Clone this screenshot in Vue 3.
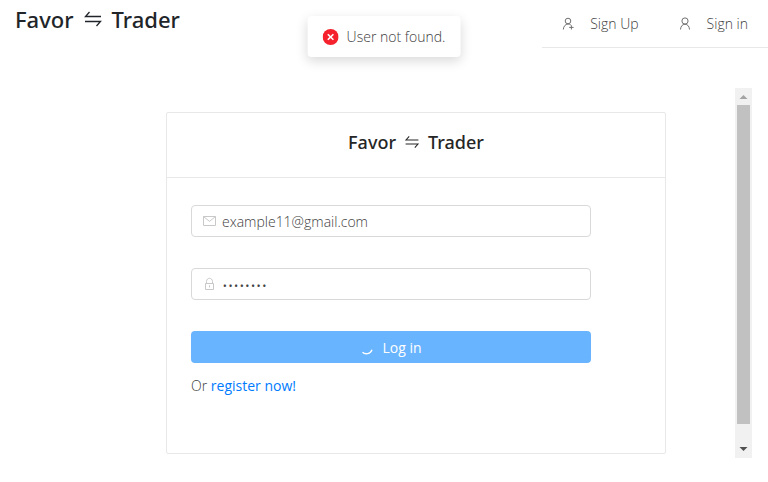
<script setup>
import { ref } from 'vue'

const email = ref('example11@gmail.com')
const password = ref('password')
</script>

<template>
  <div class="page">
    <header class="topbar">
      <h1 class="brand">
        Favor
        <svg class="swap" viewBox="0 0 20 20" aria-hidden="true">
          <path d="M18 7.5H2.5L6.5 3M2 12.5H17.5L13.5 17" />
        </svg>
        Trader
      </h1>
      <nav class="menu">
        <a href="#signup" class="menu-item">
          <svg class="icon" viewBox="0 0 14 14" aria-hidden="true">
            <circle cx="6" cy="4" r="2.8" />
            <path d="M1.3 12.5C1.5 9.4 3.3 7.2 6 7C7.2 7 8.1 7.4 8.8 8M7.2 10.4H11.6M9.4 8.3V12.5" />
          </svg>
          Sign Up
        </a>
        <a href="#signin" class="menu-item">
          <svg class="icon" viewBox="0 0 14 14" aria-hidden="true">
            <circle cx="6" cy="4" r="3.1" />
            <path d="M1.5 12.5C1.7 9.4 3.2 7.4 6 7.2C8.8 7.4 10.3 9.4 10.5 12.5" />
          </svg>
          Sign in
        </a>
      </nav>
    </header>

    <div class="toast" role="alert">
      <svg class="toast-icon" viewBox="0 0 16 16" aria-hidden="true">
        <circle cx="8" cy="8" r="8" />
        <path d="M5.2 5.2L10.8 10.8M10.8 5.2L5.2 10.8" />
      </svg>
      <span>User not found.</span>
    </div>

    <main class="scroller">
      <div class="viewport">
        <section class="card">
          <h2 class="card-title">
            Favor
            <svg class="swap" viewBox="0 0 20 20" aria-hidden="true">
              <path d="M18 7.5H2.5L6.5 3M2 12.5H17.5L13.5 17" />
            </svg>
            Trader
          </h2>
          <form class="form" @submit.prevent>
            <label class="field">
              <svg class="field-icon" viewBox="0 0 14 14" aria-hidden="true">
                <path d="M0.5 2.5H12.5V11.5H0.5ZM0.5 2.5L6.5 7.4L12.5 2.5" />
              </svg>
              <input v-model="email" type="email" aria-label="Email" />
            </label>
            <label class="field">
              <svg class="field-icon" viewBox="0 0 14 14" aria-hidden="true">
                <path d="M2.5 6.5H10.5V12.5H2.5ZM3.5 6.5V4.5C3.5 0.3 9.5 0.3 9.5 4.5V6.5M6.5 8.3V10.5" />
              </svg>
              <input v-model="password" class="secret" type="password" aria-label="Password" />
            </label>
            <button class="submit" type="submit">
              <svg class="spinner" viewBox="0 0 14 14" aria-hidden="true">
                <path d="M2.5 11.2C5 13.8 10.6 13.2 12 8.8" />
              </svg>
              Log in
            </button>
            <p class="alt">Or <a href="#register">register now!</a></p>
          </form>
        </section>
      </div>
      <div class="scrollbar" aria-hidden="true">
        <svg class="arrow" viewBox="0 0 17 17"><path d="M4.5 11L8.5 7L12.5 11Z" /></svg>
        <div class="thumb"></div>
        <svg class="arrow down" viewBox="0 0 17 17"><path d="M4.5 6L8.5 10L12.5 6Z" /></svg>
      </div>
    </main>
  </div>
</template>

<style>
body {
  margin: 0;
  background: #fff;
}
</style>

<style scoped>
.page {
  box-sizing: border-box;
  min-height: 100vh;
  font: 14px/22px "Open Sans", "Noto Sans", sans-serif;
  font-weight: 300;
  color: #404040;
}

.topbar {
  display: flex;
  justify-content: space-between;
  align-items: flex-start;
  padding-left: 15px;
}

.brand,
.card-title {
  display: flex;
  align-items: center;
  gap: 8px;
  margin: 0;
  font-family: "Noto Sans", "Open Sans", sans-serif;
  font-weight: 500;
}

.brand {
  gap: 9px;
  font-size: 22px;
  line-height: 38px;
  color: #212529;
}

.swap {
  width: 20px;
  height: 20px;
  fill: none;
  stroke: currentColor;
  stroke-width: 1.3;
}

.menu {
  display: flex;
  border-bottom: 1px solid #e8e8e8;
}

.menu-item {
  display: flex;
  align-items: center;
  gap: 14px;
  padding: 0 20px;
  line-height: 47px;
  color: #404040;
  text-decoration: none;
}

.icon {
  width: 14px;
  height: 14px;
  fill: none;
  stroke: #707070;
  stroke-width: 1;
}

.toast {
  position: absolute;
  top: 16px;
  left: 50%;
  transform: translateX(-50%);
  display: flex;
  align-items: center;
  gap: 8px;
  padding: 10px 15px 9px;
  border-radius: 4px;
  background: #fff;
  box-shadow: 0 4px 12px rgba(0, 0, 0, 0.15);
  white-space: nowrap;
}

.toast-icon {
  width: 16px;
  height: 16px;
  fill: #f5222d;
}

.toast-icon path {
  stroke: #fff;
  stroke-width: 1.6;
}

.scroller {
  display: flex;
  margin: 40px 16px 24px;
}

.viewport {
  flex: 1;
  min-width: 0;
  padding: 24px 0 4px 150px;
}

.card {
  box-sizing: border-box;
  max-width: 500px;
  border: 1px solid #e8e8e8;
  border-radius: 2px;
}

.card-title {
  justify-content: center;
  padding: 15px 24px 21px;
  border-bottom: 1px solid #e8e8e8;
  font-size: 18px;
  line-height: 28px;
  color: #262626;
}

.card-title .swap {
  width: 16px;
  height: 16px;
}

.form {
  max-width: 400px;
  padding: 27px 24px 56px;
}

.field {
  box-sizing: border-box;
  display: flex;
  align-items: center;
  gap: 5px;
  height: 32px;
  margin-bottom: 31px;
  padding: 0 11px;
  border: 1px solid #d9d9d9;
  border-radius: 4px;
}

.field-icon {
  flex: none;
  width: 14px;
  height: 14px;
  fill: none;
  stroke: #c8c8c8;
}

.field input {
  flex: 1;
  min-width: 0;
  padding: 2px 0 0;
  border: 0;
  outline: 0;
  background: transparent;
  font: inherit;
  color: #404040;
}

.field .secret {
  font-size: 15px;
}

.submit {
  display: flex;
  justify-content: center;
  align-items: center;
  gap: 8px;
  width: 100%;
  height: 32px;
  padding: 2px 0 0;
  border: 0;
  border-radius: 4px;
  background: #69b4ff;
  font: inherit;
  font-weight: 400;
  color: #fff;
}

.spinner {
  width: 14px;
  height: 14px;
  fill: none;
  stroke: #fff;
  stroke-width: 1.3;
}

.alt {
  margin: 12px 0 0;
}

.alt a {
  color: #007bff;
  font-weight: 400;
  text-decoration: none;
}

.scrollbar {
  display: flex;
  flex-direction: column;
  width: 17px;
  background: #f1f1f1;
}

.arrow {
  width: 17px;
  height: 17px;
  fill: #a3a3a3;
}

.down {
  margin-top: auto;
  fill: #505050;
}

.thumb {
  flex: 0 1 319px;
  margin: 0 2px;
  background: #c1c1c1;
}
</style>
